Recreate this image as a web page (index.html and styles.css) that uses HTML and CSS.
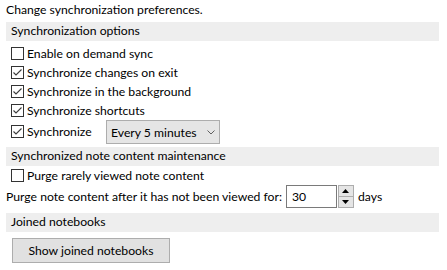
FILE: index.html
```html
<!DOCTYPE html>
<html>
<head>
<meta charset="utf-8">
<link rel="stylesheet" href="styles.css">
</head>
<body>
<div class="page">
  <p class="intro">Change synchronization preferences.</p>

  <div class="section">Synchronization options</div>
  <div class="rows">
    <label class="row"><span class="cb"></span>Enable on demand sync</label>
    <label class="row"><span class="cb"><svg width="11" height="11" viewBox="0 0 11 11"><polyline points="1.5,5.5 4,8 9.5,2.5" /></svg></span>Synchronize changes on exit</label>
    <label class="row"><span class="cb"><svg width="11" height="11" viewBox="0 0 11 11"><polyline points="1.5,5.5 4,8 9.5,2.5" /></svg></span>Synchronize in the background</label>
    <label class="row"><span class="cb"><svg width="11" height="11" viewBox="0 0 11 11"><polyline points="1.5,5.5 4,8 9.5,2.5" /></svg></span>Synchronize shortcuts</label>
    <div class="row row-combo">
      <label class="combo-label"><span class="cb"><svg width="11" height="11" viewBox="0 0 11 11"><polyline points="1.5,5.5 4,8 9.5,2.5" /></svg></span>Synchronize</label>
      <div class="combo"><span>Every 5 minutes</span><svg class="chev" width="8" height="5" viewBox="0 0 8 5"><polyline points="0.5,0.5 4,4 7.5,0.5" /></svg></div>
    </div>
  </div>

  <div class="section section-2">Synchronized note content maintenance</div>
  <label class="row"><span class="cb"></span>Purge rarely viewed note content</label>
  <div class="purge-row">
    <span>Purge note content after it has not been viewed for:</span>
    <div class="num">30</div>
    <div class="spin">
      <div class="spin-btn"><svg width="7" height="4" viewBox="0 0 7 4"><polygon points="0,4 3.5,0 7,4" /></svg></div>
      <div class="spin-btn"><svg width="7" height="4" viewBox="0 0 7 4"><polygon points="0,0 3.5,4 7,0" /></svg></div>
    </div>
    <span class="days">days</span>
  </div>

  <div class="section section-3">Joined notebooks</div>
  <button class="btn">Show joined notebooks</button>
</div>
</body>
</html>
```
FILE: styles.css
```css
html, body {
  margin: 0;
  padding: 0;
  background: #ffffff;
}
body {
  font-family: Lato, "Liberation Sans", sans-serif;
  font-size: 12.2px;
  color: #000000;
}
.page {
  width: 433px;
  padding: 0 8px 0 6px;
}
.intro {
  margin: 0;
  height: 22px;
  line-height: 20px;
}
.section {
  height: 19px;
  line-height: 18px;
  background: #eeeeee;
  padding-left: 5px;
}
.rows {
  padding-top: 3px;
}
.row {
  display: flex;
  align-items: center;
  height: 19px;
  padding-left: 5px;
}
.cb {
  box-sizing: border-box;
  width: 13px;
  height: 13px;
  border: 1px solid #333333;
  background: #ffffff;
  margin-right: 3px;
  flex: none;
  display: flex;
}
.cb svg polyline {
  fill: none;
  stroke: #3c3c3c;
  stroke-width: 1.1;
}
.row-combo {
  height: 24px;
}
.combo-label {
  display: flex;
  align-items: center;
  width: 95px;
  margin-top: -2px;
}
.combo {
  box-sizing: border-box;
  width: 114px;
  height: 24px;
  border: 1px solid #adadad;
  background: #e5e5e5;
  display: flex;
  align-items: center;
  padding: 0 4px 0 4px;
}
.chev {
  margin-left: auto;
}
.chev polyline {
  fill: none;
  stroke: #606060;
  stroke-width: 1;
}
.section-2 {
  margin-top: 3px;
}
.purge-row {
  display: flex;
  align-items: center;
  height: 23px;
}
.num {
  box-sizing: border-box;
  width: 51px;
  height: 23px;
  border: 1px solid #7a7a7a;
  padding-left: 5px;
  line-height: 21px;
  margin-left: 4px;
}
.spin {
  box-sizing: border-box;
  width: 16px;
  height: 23px;
  margin-left: 1px;
  display: flex;
  flex-direction: column;
}
.spin-btn {
  box-sizing: border-box;
  flex: 1;
  border: 1px solid #adadad;
  background: #e5e5e5;
  display: flex;
  align-items: center;
  justify-content: center;
}
.spin-btn + .spin-btn {
  border-top: none;
}
.spin-btn svg polygon {
  fill: #000000;
}
.days {
  margin-left: 4px;
}
.section-3 {
  margin-top: 5px;
}
.btn {
  display: block;
  box-sizing: border-box;
  margin: 6px 0 0 6px;
  width: 158px;
  height: 25px;
  border: 1px solid #adadad;
  background: #e1e1e1;
  font-family: inherit;
  font-size: 12.2px;
  color: #000000;
  padding: 0;
}
```
